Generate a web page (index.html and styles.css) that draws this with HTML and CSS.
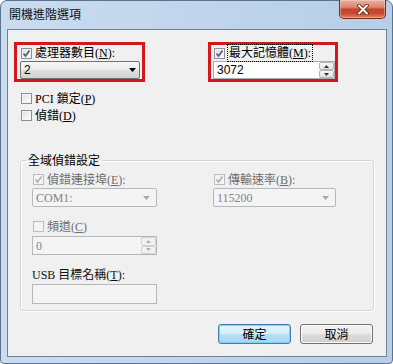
FILE: index.html
```html
<!DOCTYPE html>
<html lang="zh-Hant">
<head>
    <meta charset="UTF-8">
    <title>開機進階選項</title>
    <link rel="stylesheet" href="styles.css">
</head>
<body>
    <div class="window">
        <div class="titlebar">
            <span class="title">開機進階選項</span>
            <span class="close">
                <svg width="12" height="11" viewBox="0 0 12 11">
                    <path d="M2 1.5 L10 9.5 M10 1.5 L2 9.5" stroke="#5a1a10" stroke-width="3.6" stroke-linecap="round"/>
                    <path d="M2 1.5 L10 9.5 M10 1.5 L2 9.5" stroke="#fff" stroke-width="2" stroke-linecap="round"/>
                </svg>
            </span>
        </div>

        <div class="client">
            <div class="top-row">
                <div class="mark mark-cpu">
                    <div class="check">
                        <span class="cb">
                            <svg width="9" height="9" viewBox="0 0 9 9"><path d="M1.5 4.5 L3.5 7 L7.5 1.5" fill="none" stroke="#4a5f93" stroke-width="1.7"/></svg>
                        </span>
                        <span>處理器數目(<u>N</u>):</span>
                    </div>
                    <div class="combo">
                        <span class="sans">2</span>
                        <svg class="arrow" width="7" height="4" viewBox="0 0 7 4"><path d="M0 0 H7 L3.5 4 Z" fill="#000"/></svg>
                    </div>
                </div>

                <div class="mark mark-mem">
                    <div class="check">
                        <span class="cb">
                            <svg width="9" height="9" viewBox="0 0 9 9"><path d="M1.5 4.5 L3.5 7 L7.5 1.5" fill="none" stroke="#4a5f93" stroke-width="1.7"/></svg>
                        </span>
                        <span class="focus">最大記憶體(<u>M</u>):</span>
                    </div>
                    <div class="spin">
                        <span class="sans">3072</span>
                        <span class="spin-btns">
                            <span class="sbtn"><svg width="5" height="3" viewBox="0 0 5 3"><path d="M0 3 H5 L2.5 0 Z" fill="#333"/></svg></span>
                            <span class="sbtn"><svg width="5" height="3" viewBox="0 0 5 3"><path d="M0 0 H5 L2.5 3 Z" fill="#333"/></svg></span>
                        </span>
                    </div>
                </div>
            </div>

            <div class="options">
                <div class="check row"><span class="cb"></span><span>PCI 鎖定(<u>P</u>)</span></div>
                <div class="check row"><span class="cb"></span><span>偵錯(<u>D</u>)</span></div>
            </div>

            <fieldset class="group">
                <legend>全域偵錯設定</legend>
                <div class="group-grid">
                    <div class="field">
                        <div class="check line disabled">
                            <span class="cb">
                                <svg width="9" height="9" viewBox="0 0 9 9"><path d="M1.5 4.5 L3.5 7 L7.5 1.5" fill="none" stroke="#b0b0b0" stroke-width="1.7"/></svg>
                            </span>
                            <span>偵錯連接埠(<u>E</u>):</span>
                        </div>
                        <div class="combo off">
                            <span>COM1:</span>
                            <svg class="arrow" width="7" height="4" viewBox="0 0 7 4"><path d="M0 0 H7 L3.5 4 Z" fill="#a8a8a8"/></svg>
                        </div>
                    </div>
                    <div class="field">
                        <div class="check line disabled">
                            <span class="cb">
                                <svg width="9" height="9" viewBox="0 0 9 9"><path d="M1.5 4.5 L3.5 7 L7.5 1.5" fill="none" stroke="#b0b0b0" stroke-width="1.7"/></svg>
                            </span>
                            <span>傳輸速率(<u>B</u>):</span>
                        </div>
                        <div class="combo off wide">
                            <span>115200</span>
                            <svg class="arrow" width="7" height="4" viewBox="0 0 7 4"><path d="M0 0 H7 L3.5 4 Z" fill="#a8a8a8"/></svg>
                        </div>
                    </div>

                    <div class="field second">
                        <div class="check line disabled"><span class="cb"></span><span>頻道(<u>C</u>)</span></div>
                        <div class="spin off">
                            <span>0</span>
                            <span class="spin-btns">
                                <span class="sbtn"><svg width="5" height="3" viewBox="0 0 5 3"><path d="M0 3 H5 L2.5 0 Z" fill="#b0b0b0"/></svg></span>
                                <span class="sbtn"><svg width="5" height="3" viewBox="0 0 5 3"><path d="M0 0 H5 L2.5 3 Z" fill="#b0b0b0"/></svg></span>
                            </span>
                        </div>
                    </div>
                    <div></div>

                    <div class="field third">
                        <div class="label">USB 目標名稱(<u>T</u>):</div>
                        <div class="textbox"></div>
                    </div>
                </div>
            </fieldset>

            <div class="buttons">
                <button class="btn default">確定</button>
                <button class="btn">取消</button>
            </div>
        </div>
    </div>
</body>
</html>
```

FILE: styles.css
```css
* {
    box-sizing: border-box;
}

body {
    margin: 0;
    background: #fff;
    font-family: "Liberation Serif", "Noto Sans CJK TC", serif;
    font-size: 12px;
    line-height: 16px;
    color: #000;
}

.sans {
    font-family: "Liberation Sans", "Noto Sans CJK TC", sans-serif;
}

.window {
    width: 393px;
    height: 364px;
    display: flex;
    flex-direction: column;
    border: 1px solid #5d7290;
    border-radius: 7px 7px 4px 4px;
    background: linear-gradient(to right, #cadcf0 0%, #c1d6ec 45%, #b7cee8 100%);
    padding: 0 5px 6px 6px;
}

.titlebar {
    height: 28px;
    display: flex;
    justify-content: space-between;
    align-items: flex-start;
}

.title {
    margin: 6px 0 0 2px;
    line-height: 14px;
    font-family: "Noto Sans CJK TC", sans-serif;
    color: #111;
}

.close {
    width: 47px;
    height: 19px;
    margin: -1px 1px 0 0;
    display: flex;
    align-items: center;
    justify-content: center;
    border: 1px solid #76291d;
    border-top: none;
    border-radius: 0 0 5px 5px;
    background: linear-gradient(#eab0a2 0%, #dc8670 40%, #c5422a 52%, #c94a30 75%, #e2805f 100%);
    box-shadow: inset 0 0 0 1px rgba(255, 220, 210, 0.45);
}

.client {
    flex: 1;
    background: #f0f0f0;
    border: 1px solid #6e8196;
    display: flex;
    flex-direction: column;
}

/* top row with the two marked boxes */
.top-row {
    display: flex;
    gap: 63px;
    margin-top: 12px;
    padding-left: 6px;
}

.mark {
    border: 3px solid #d4171d;
}

.mark-cpu {
    width: 131px;
    padding: 0 2px 0 3px;
}

.mark-mem {
    width: 130px;
    padding: 0 0 0 2px;
}

.check {
    display: flex;
    align-items: center;
    gap: 3px;
    height: 16px;
    white-space: nowrap;
}

.cb {
    flex: none;
    width: 11px;
    height: 11px;
    margin-left: 1px;
    display: flex;
    align-items: center;
    justify-content: center;
    border: 1px solid #8e8f8f;
    background: linear-gradient(135deg, #dcdcdc 0%, #f6f6f6 70%, #fdfdfd 100%);
    box-shadow: inset 0 0 0 1px #f4f4f4;
}

.disabled {
    color: #6d6d6d;
}

.disabled .cb {
    border-color: #bcbcbc;
    background: #f4f4f4;
    box-shadow: none;
}

.focus {
    outline: 1px dotted #000;
    outline-offset: 0;
    padding: 0 1px;
}

.combo {
    width: 120px;
    height: 18px;
    display: flex;
    align-items: center;
    justify-content: space-between;
    padding: 0 3px 0 3px;
    border: 1px solid #707070;
    border-radius: 2px;
    background: linear-gradient(#f6f6f6 0%, #ececec 50%, #dedede 51%, #d2d2d2 100%);
}

.combo .arrow {
    margin-right: 0;
}

.combo.off {
    width: 125px;
    height: 19px;
    border-color: #b5b8bb;
    background: #f4f4f4;
    color: #838383;
    padding-right: 6px;
}

.combo.off.wide {
    width: 123px;
}

.spin {
    width: 122px;
    height: 18px;
    display: flex;
    align-items: center;
    padding-left: 3px;
    border: 1px solid #abadb3;
    background: #fff;
}

.spin-btns {
    margin-left: auto;
    width: 15px;
    height: 100%;
    display: flex;
    flex-direction: column;
}

.sbtn {
    flex: 1;
    display: flex;
    align-items: center;
    justify-content: center;
    border: 1px solid #b4b4b4;
    border-radius: 2px;
    background: linear-gradient(#f7f7f7, #e2e2e2);
}

.spin.off {
    width: 125px;
    height: 19px;
    margin-top: 1px;
    border-color: #b5b8bb;
    background: #f4f4f4;
    color: #838383;
}

.spin.off .sbtn {
    border-color: #d2d2d2;
    background: #f2f2f2;
}

.options {
    margin-top: 8px;
    padding-left: 12px;
}

.options .row {
    height: 17px;
}

/* group box */
.group {
    margin: 29px 0 0 12px;
    width: 354px;
    padding: 0 0 6px 0;
    border: 1px solid #d2d6d9;
    border-radius: 3px;
    box-shadow: inset 1px 1px 0 #fff, 1px 1px 0 #fff;
    min-inline-size: 0;
}

.group legend {
    margin-left: 5px;
    padding: 0 2px;
    line-height: 14px;
    font-family: "Noto Sans CJK TC", sans-serif;
}

.group-grid {
    display: grid;
    grid-template-columns: 125px 123px;
    column-gap: 56px;
    padding: 4px 0 0 11px;
}

.check.line {
    height: 17px;
}

.field.second {
    margin-top: 11px;
}

.field.third {
    margin-top: 12px;
}

.label {
    height: 17px;
    line-height: 17px;
    white-space: nowrap;
    color: #111;
}

.textbox {
    width: 125px;
    height: 20px;
    border: 1px solid #b5b8bb;
    background: #f4f4f4;
}

/* dialog buttons */
.buttons {
    display: flex;
    justify-content: flex-end;
    gap: 9px;
    margin-top: 13px;
    padding-right: 13px;
}

.btn {
    width: 73px;
    height: 20px;
    padding: 0;
    font-family: "Noto Sans CJK TC", sans-serif;
    font-size: 12px;
    line-height: 16px;
    color: #000;
    border: 1px solid #707070;
    border-radius: 3px;
    background: linear-gradient(#f2f2f2 0%, #ebebeb 49%, #dddddd 50%, #cfcfcf 100%);
    box-shadow: inset 0 0 0 1px #fcfcfc;
}

.btn.default {
    border-color: #3c7fb1;
    background: linear-gradient(#e5f4fc 0%, #d3edfa 49%, #b6e0f6 50%, #a5d6f2 100%);
    box-shadow: inset 0 0 0 1px #7fd1f3;
}
```
